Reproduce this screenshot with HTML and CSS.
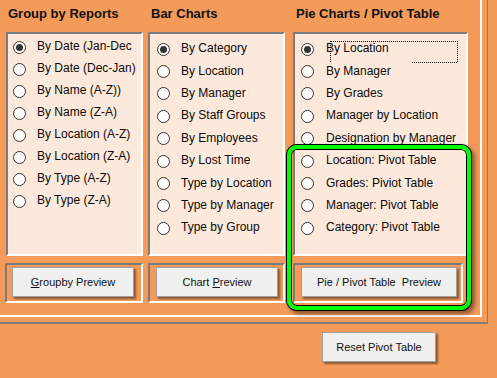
FILE: index.html
```html
<!DOCTYPE html>
<html lang="en">
  <head>
    <meta charset="UTF-8" />
    <title>Report Options</title>
    <link rel="stylesheet" href="styles.css">
  </head>
  <body>
    <div class="form">
      <div class="frame-outer">
        <div class="frame-inner">
          <div class="columns">
            <!-- Group by reports -->
            <section class="col col-group">
              <h2>Group by Reports</h2>
              <div class="listbox">
                <label class="opt"><span class="radio checked"></span>By Date (Jan-Dec</label>
                <label class="opt"><span class="radio"></span>By Date (Dec-Jan)</label>
                <label class="opt"><span class="radio"></span>By Name (A-Z))</label>
                <label class="opt"><span class="radio"></span>By Name (Z-A)</label>
                <label class="opt"><span class="radio"></span>By Location (A-Z)</label>
                <label class="opt"><span class="radio"></span>By Location (Z-A)</label>
                <label class="opt"><span class="radio"></span>By Type (A-Z)</label>
                <label class="opt"><span class="radio"></span>By Type (Z-A)</label>
              </div>
              <div class="btnbox">
                <button class="btn"><u>G</u>roupby Preview</button>
              </div>
            </section>

            <!-- Bar charts -->
            <section class="col col-bar">
              <h2>Bar Charts</h2>
              <div class="listbox">
                <label class="opt"><span class="radio checked"></span>By Category</label>
                <label class="opt"><span class="radio"></span>By Location</label>
                <label class="opt"><span class="radio"></span>By Manager</label>
                <label class="opt"><span class="radio"></span>By Staff Groups</label>
                <label class="opt"><span class="radio"></span>By Employees</label>
                <label class="opt"><span class="radio"></span>By Lost Time</label>
                <label class="opt"><span class="radio"></span>Type by Location</label>
                <label class="opt"><span class="radio"></span>Type by Manager</label>
                <label class="opt"><span class="radio"></span>Type by Group</label>
              </div>
              <div class="btnbox">
                <button class="btn">Chart <u>P</u>review</button>
              </div>
            </section>

            <!-- Pie charts / pivot -->
            <section class="col col-pie">
              <h2>Pie Charts / Pivot Table</h2>
              <div class="listbox">
                <label class="opt focused"><span class="radio checked"></span>By Location</label>
                <label class="opt"><span class="radio"></span>By Manager</label>
                <label class="opt"><span class="radio"></span>By Grades</label>
                <label class="opt"><span class="radio"></span>Manager by Location</label>
                <label class="opt"><span class="radio"></span>Designation by Manager</label>
                <label class="opt"><span class="radio"></span>Location: Pivot Table</label>
                <label class="opt"><span class="radio"></span>Grades: Piviot Table</label>
                <label class="opt"><span class="radio"></span>Manager: Pivot Table</label>
                <label class="opt"><span class="radio"></span>Category: Pivot Table</label>
              </div>
              <div class="btnbox">
                <button class="btn">Pie / Pivot Table&nbsp; Preview</button>
              </div>
            </section>
          </div>
        </div>
      </div>

      <div class="reset-row">
        <button class="btn btn-reset">Reset Pivot Table</button>
      </div>

      <!-- green highlight round the pivot options -->
      <div class="highlight"></div>
    </div>
  </body>
</html>
```

FILE: styles.css
```css
body {
  margin: 0;
  background: #f59b5a;
  font-family: "Liberation Sans", Arial, sans-serif;
  color: #0a0a0a;
}
.form {
  position: relative;
  width: 497px;
  height: 378px;
  overflow: hidden;
}
.frame-outer {
  display: inline-block;
  padding: 0 5px 5px 0;
  border-right: 1px solid #808080;
  border-bottom: 2px solid #808080;
}
.frame-inner {
  width: 480px;
  height: 315px;
  border-right: 2px solid #fff;
  border-bottom: 2px solid #fff;
}
.columns {
  display: flex;
  padding-left: 5px;
}
.col {
  display: flex;
  flex-direction: column;
}
.col-group {
  width: 138px;
}
.col-bar {
  width: 137px;
  margin-left: 5px;
}
.col-pie {
  width: 175px;
  margin-left: 8px;
}
.col h2 {
  margin: 0;
  height: 32px;
  line-height: 27px;
  padding-left: 3px;
  font-size: 13px;
  font-weight: bold;
  color: #111;
}
.listbox {
  box-sizing: border-box;
  height: 224px;
  background: #fde9db;
  border: 2px solid;
  border-color: #7c7c7c #fff #fff #7c7c7c;
  display: flex;
  flex-direction: column;
}
.col-group .listbox {
  margin-left: 1px;
  padding: 1px 0 0 5px;
}
.col-bar .listbox {
  padding: 3px 0 0 7px;
}
.col-pie .listbox {
  padding: 3px 0 0 6px;
}
.opt {
  position: relative;
  display: flex;
  align-items: center;
  height: 22px;
  font-size: 12px;
  white-space: nowrap;
}
.col-bar .opt,
.col-pie .opt {
  height: 22.4px;
}
.radio {
  box-sizing: border-box;
  width: 13px;
  height: 13px;
  margin: 2px 11px 0 0;
  border: 1px solid #333;
  border-radius: 50%;
  background: #fff;
  display: flex;
  align-items: center;
  justify-content: center;
  flex-shrink: 0;
}
.col-pie .radio {
  margin-right: 12px;
}
.radio.checked::after {
  content: "";
  width: 7px;
  height: 7px;
  border-radius: 50%;
  background: #333;
}
/* dotted focus box on the selected pie option */
.focused::before {
  content: "";
  position: absolute;
  left: 29px;
  top: 4px;
  width: 126px;
  height: 20px;
  border: 1px dotted #000;
  border-bottom: none;
}
.focused::after {
  content: "";
  position: absolute;
  left: 111px;
  top: 25px;
  width: 45px;
  border-top: 1px dotted #000;
}
.btnbox {
  box-sizing: border-box;
  height: 40px;
  margin-top: 7px;
  border: 2px solid;
  border-color: #7c7c7c #fff #fff #7c7c7c;
  padding-top: 2px;
}
.col-group .btnbox {
  padding-left: 5px;
}
.col-bar .btnbox {
  padding-left: 6px;
}
.col-pie .btnbox {
  width: 170px;
  padding-left: 6px;
}
.btn {
  box-sizing: border-box;
  height: 30px;
  width: 122px;
  padding: 0;
  background: #f0f0f0;
  border: 1px solid #a0a0a0;
  box-shadow: 2px 2px 2px rgba(0, 0, 0, 0.45);
  font-family: "Liberation Sans", Arial, sans-serif;
  font-size: 11px;
  color: #111;
}
.col-pie .btn {
  width: 156px;
}
.reset-row {
  padding: 8px 0 0 322px;
}
.btn-reset {
  width: 114px;
}
.highlight {
  position: absolute;
  left: 287px;
  top: 145px;
  width: 184px;
  height: 165px;
  box-sizing: border-box;
  border: 4px solid #00ff00;
  border-radius: 10px;
  box-shadow: 0 0 0 1px #000, inset 0 0 0 1px #000, 3px 3px 4px 1px rgba(0, 0, 0, 0.45);
}
```
